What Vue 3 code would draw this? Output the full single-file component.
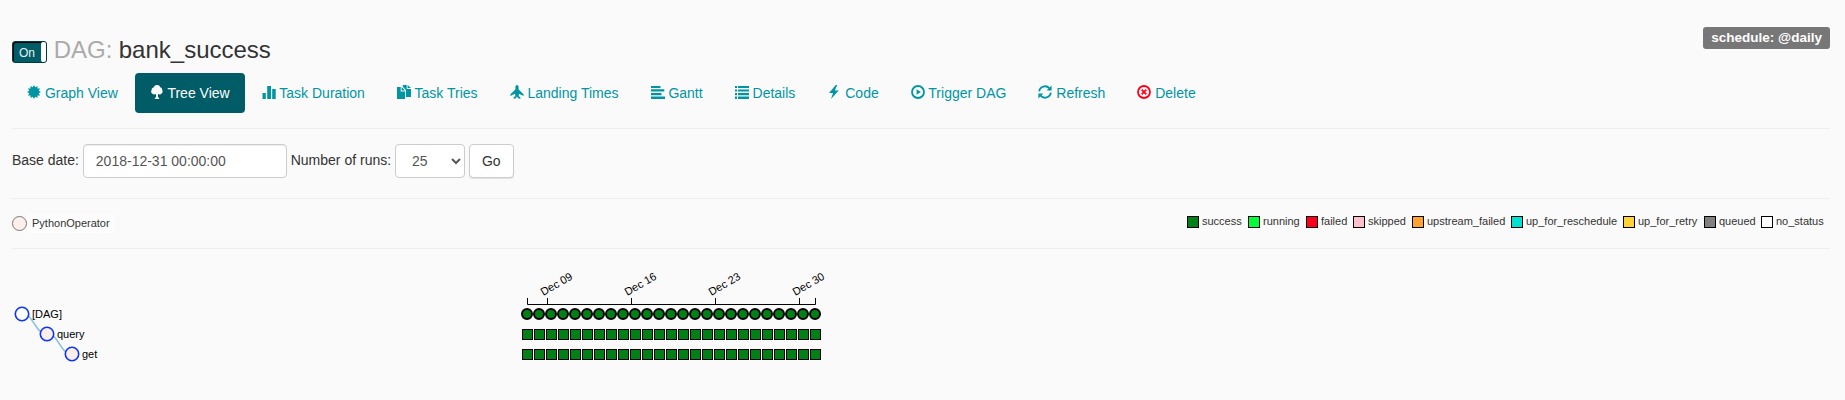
<script setup>
const burst = Array.from({ length: 24 }, (_, i) => {
  const r = i % 2 ? 4.9 : 7
  const a = (i * Math.PI) / 12 - Math.PI / 2
  return `${(7 + r * Math.cos(a)).toFixed(2)},${(7 + r * Math.sin(a)).toFixed(2)}`
}).join(' ')

const tabs = [
  { icon: 'burst', label: 'Graph View' },
  { icon: 'M7 0C5.2 0 4.1 1 3.9 2.2 2.3 2.6 1.4 3.8 1.7 5 .7 6 1 8 2.4 8.8 3.6 9.8 5 9.6 6 9.1V12L4.8 13.3V14H9.2V13.3L8 12V9.1C9.3 9.7 10.8 9.6 11.6 8.5 12.8 7.7 13 6 12.1 5 12.4 3.6 11.5 2.5 10.1 2.2 9.8.9 8.7 0 7 0Z', label: 'Tree View', active: true },
  { icon: 'M.5 8H3.8V14H.5ZM5.2 1H9V14H5.2ZM10.2 4H13.7V14H10.2Z', label: 'Task Duration' },
  { icon: 'M0 2H3.7V6.6H8V14H0ZM4.6 2L8 5.6H4.6ZM5.8 0H9.7V4H14V12H8.9V5L5.8 1.7ZM10.6 0L14 3.1H10.6Z', label: 'Task Tries' },
  { icon: 'M7 0C8 0 8.6 1 8.6 2.2V4.6L13.6 9.2V11L9 8.8 8.7 11 10.4 12.6V14L7.8 13 7.4 11.8H6.6L6.2 13 3.6 14V12.6L5.3 11 5 8.8.4 11V9.2L5.4 4.6V2.2C5.4 1 6 0 7 0Z', label: 'Landing Times' },
  { icon: 'M0 1H9.5V3H0ZM0 4.3H13.3V6.6H0ZM0 8H10.5V10.2H0ZM0 11.5H14V14H0Z', label: 'Gantt' },
  { icon: 'M0 1H2V3H0ZM3 1H14V3H3ZM0 4.4H2V6.6H0ZM3 4.4H14V6.6H3ZM0 8H2V10.2H0ZM3 8H14V10.2H3ZM0 11.6H2V14H0ZM3 11.6H14V14H3Z', label: 'Details' },
  { icon: 'M8.8 0L2 8H6L4 14 11.8 5.5H7.8L10.2 0Z', label: 'Code' },
  { icon: 'play', label: 'Trigger DAG' },
  { icon: 'refresh', label: 'Refresh' },
  { icon: 'remove', label: 'Delete' },
]

const states = [
  ['success', '#008015'], ['running', '#01FF38'], ['failed', '#FF001A'],
  ['skipped', '#FFC0CB'], ['upstream_failed', '#FFA22F'], ['up_for_reschedule', '#00E1D1'],
  ['up_for_retry', '#FFD333'], ['queued', '#808080'], ['no_status', '#FFFFFF'],
].map(([name, color]) => ({ name, color }))

const runs = Array.from({ length: 25 }, (_, i) => i * 12)
const ticks = [
  { x: 547.5, label: 'Dec 09' }, { x: 631.5, label: 'Dec 16' },
  { x: 715.5, label: 'Dec 23' }, { x: 799.5, label: 'Dec 30' },
]
const tasks = [
  { x: 22, y: 65, name: '[DAG]', fill: '#fff' },
  { x: 47, y: 85, name: 'query', fill: '#ffefeb' },
  { x: 72, y: 105, name: 'get', fill: '#ffefeb' },
]
</script>

<template>
  <div class="page">
    <header class="head">
      <h3 class="title">
        <span class="toggle"><span class="on">On</span><span class="handle"></span></span>
        <span class="muted">DAG:</span>
        <span>bank_success</span>
      </h3>
      <span class="badge">schedule: @daily</span>
    </header>

    <nav class="tabs">
      <a v-for="t in tabs" :key="t.label" class="tab" :class="{ active: t.active }">
        <svg class="icon" :class="{ danger: t.icon === 'remove' }" viewBox="0 0 14 14">
          <polygon v-if="t.icon === 'burst'" :points="burst" fill="currentColor" />
          <g v-else-if="t.icon === 'play'">
            <circle cx="7" cy="7" r="6" fill="none" stroke="currentColor" stroke-width="1.8" />
            <path d="M5.6 4.2L9.8 7 5.6 9.8Z" fill="currentColor" />
          </g>
          <g v-else-if="t.icon === 'refresh'">
            <path d="M1.2 6.3A5.8 5.8 0 0 1 11.4 3.4M12.8 7.7A5.8 5.8 0 0 1 2.6 10.6" fill="none" stroke="currentColor" stroke-width="1.8" />
            <path d="M13.6.6V5.4H8.7ZM.4 13.4V8.6H5.3Z" fill="currentColor" />
          </g>
          <g v-else-if="t.icon === 'remove'" fill="none" stroke="currentColor" stroke-width="1.8">
            <circle cx="7" cy="7" r="6" />
            <path d="M4.7 4.7L9.3 9.3M9.3 4.7L4.7 9.3" />
          </g>
          <path v-else :d="t.icon" fill="currentColor" />
        </svg>
        {{ t.label }}
      </a>
    </nav>

    <form class="filters" @submit.prevent>
      <label>Base date:</label>
      <input class="control date" type="text" value="2018-12-31 00:00:00" />
      <label>Number of runs:</label>
      <select class="control count"><option>25</option></select>
      <button class="control go" type="submit">Go</button>
    </form>

    <section class="legend">
      <div class="operator">
        <svg width="16" height="16" viewBox="0 0 16 16"><circle cx="7.5" cy="8.5" r="7" fill="#ffefeb" stroke="#777" /></svg>
        <span class="op-label">PythonOperator</span>
      </div>
      <div class="states">
        <span v-for="s in states" :key="s.name" class="state">
          <i class="swatch" :style="{ background: s.color }"></i><span class="state-name">{{ s.name }}</span>
        </span>
      </div>
    </section>

    <svg class="tree" width="1845" height="151" viewBox="0 0 1845 151">
      <path class="link" d="M22 65C34.5 65 34.5 85 47 85M47 85C59.5 85 59.5 105 72 105" />
      <g v-for="t in tasks" :key="t.name">
        <circle class="node" :cx="t.x" :cy="t.y" r="6.7" :fill="t.fill" />
        <text :x="t.x + 10" :y="t.y + 3.85">{{ t.name }}</text>
      </g>
      <path class="axis" d="M527.5 49V55.5H815.5V49" />
      <g v-for="t in ticks" :key="t.label">
        <path class="axis" :d="`M${t.x} 49V55.5`" />
        <text :transform="`translate(${t.x - 4.3} 47) rotate(-30)`">{{ t.label }}</text>
      </g>
      <g v-for="x in runs" :key="x" class="run">
        <circle :cx="527 + x" cy="65" r="5" />
        <rect :x="522.5 + x" y="80.5" width="10" height="10" />
        <rect :x="522.5 + x" y="100.5" width="10" height="10" />
      </g>
    </svg>
  </div>
</template>

<style>
body { background: #fafafa; }
html, body { overflow: hidden; }
</style>

<style scoped>
.page {
  box-sizing: border-box;
  height: 400px;
  font: 14px/20px "Liberation Sans", Arial, sans-serif;
  color: #333;
  background: #fafafa;
}
.head {
  display: flex;
  justify-content: space-between;
  align-items: flex-start;
  height: 73px;
  box-sizing: border-box;
  padding: 27px 15px 0 12px;
}
.title {
  display: flex;
  margin: 9px 0 0;
  font-size: 24px;
  line-height: 28px;
  font-weight: 400;
}
.muted { color: #aaa; margin: 0 6.4px 0 6.7px; }
.toggle {
  box-sizing: border-box;
  display: flex;
  justify-content: space-between;
  width: 35px;
  height: 22px;
  margin-top: 5px;
  border: 1px solid #003a40;
  border-radius: 3px;
  background: #005c66;
  box-shadow: inset 1px 1px 0 #000;
}
.on { padding-left: 6px; color: #e8f1f2; font-size: 12px; line-height: 22px; }
.handle { width: 5px; border-radius: 2px; background: #fff; }
.badge {
  height: 22px;
  padding: 0 8.1px;
  border-radius: 3px;
  background: #777;
  color: #fff;
  font-size: 13.5px;
  line-height: 22px;
  font-weight: 700;
}
.tabs { display: flex; gap: 2px; padding: 0 12px; }
.tab {
  display: block;
  padding: 10px 15px;
  border-radius: 4px;
  color: #0095a3;
  white-space: nowrap;
}
.tab.active { background: #005c66; color: #fff; }
.icon { display: inline-block; width: 14px; height: 14px; vertical-align: -1px; }
.danger { color: #ff001a; }
.filters {
  display: flex;
  gap: 3.9px;
  height: 54px;
  margin: 15px 15px 0 12px;
  padding-top: 15px;
  border-top: 1px solid #eee;
}
.filters label { line-height: 32px; }
.control {
  box-sizing: border-box;
  height: 34px;
  padding: 6px 12px;
  border: 1px solid #ccc;
  border-radius: 4px;
  background: #fff;
  color: #555;
  font: 14px/20px "Liberation Sans", Arial, sans-serif;
}
.date { width: 204px; box-shadow: inset 0 1px 1px rgba(0, 0, 0, .075); }
.count { width: 70px; }
.go { color: #333; box-shadow: 0 1px 1px rgba(0, 0, 0, .1); }
.legend {
  display: flex;
  justify-content: space-between;
  box-sizing: border-box;
  height: 51px;
  margin: 0 15px 0 12px;
  border-top: 1px solid #eee;
  border-bottom: 1px solid #eee;
}
.operator { display: flex; padding-top: 15px; }
.operator svg { overflow: visible; margin-right: -1px; padding-top: 1px; }
.op-label {
  height: 19px;
  padding: 0 5px;
  border-radius: 4px;
  background: #fdfdfd;
  color: #333;
  font-size: 11px;
  line-height: 18px;
}
.states {
  display: grid;
  grid-template-columns: 61px 58px 47px 59px 99px 112px 81px 57px 69px;
  padding-top: 17px;
  font-size: 11px;
  line-height: 12px;
  color: #333;
}
.state { display: flex; gap: 3px; height: 12px; }
.state-name { margin-top: -1px; }
.swatch { box-sizing: border-box; width: 12px; height: 12px; border: 1px solid #000; }
.tree { display: block; font-size: 11px; }
.tree text { fill: #000; }
.link { fill: none; stroke: #8cc3dc; stroke-width: 1.5; }
.node { stroke: #0a35ff; stroke-width: 1.6; }
.axis { fill: none; stroke: #000; }
.run { fill: #008015; stroke: #000; }
.run circle { stroke-width: 2; }
</style>
